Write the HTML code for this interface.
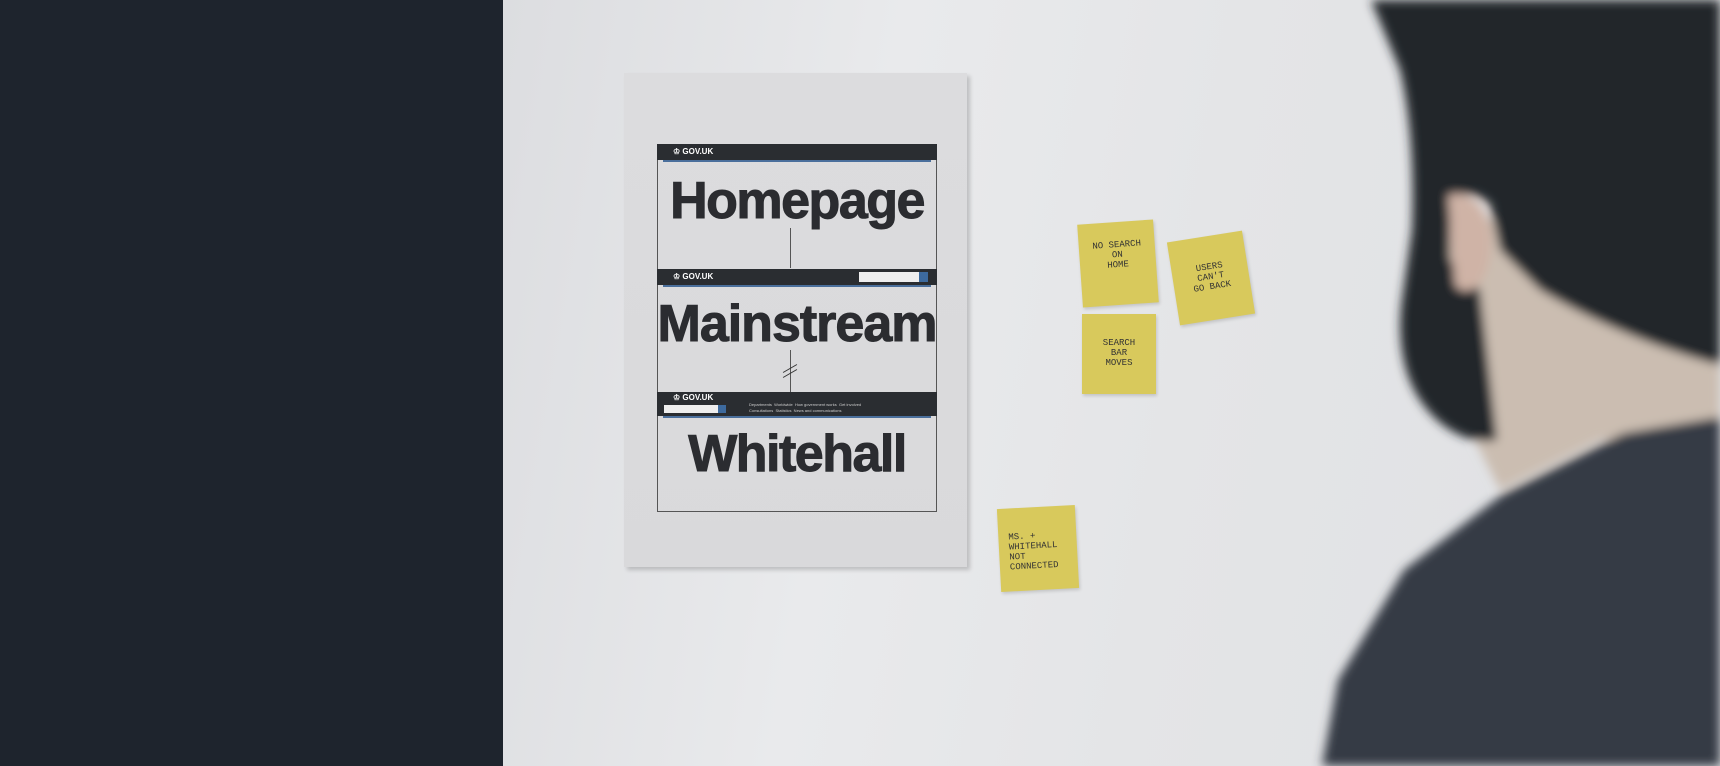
<!DOCTYPE html>
<html><head><meta charset="utf-8"><style>
html,body{margin:0;padding:0}
body{width:1720px;height:766px;position:relative;overflow:hidden;background:#e3e4e6;font-family:"Liberation Sans",Arial,sans-serif}
.left{position:absolute;left:0;top:0;width:503px;height:766px;background:#1e242d}
.wall{position:absolute;left:503px;top:0;width:1217px;height:766px;background:linear-gradient(100deg,#dcdde0 0%,#e9eaec 30%,#e4e5e7 55%,#dfe0e3 100%)}
.sheet{position:absolute;left:624px;top:73px;width:343px;height:494px;background:linear-gradient(180deg,#dcdcde,#d9d9db);box-shadow:3px 3px 4px rgba(0,0,0,.18)}
.frame{position:absolute;left:657px;top:144px;width:280px;height:368px;border:1px solid #555;box-sizing:border-box}
.bar{position:absolute;left:657px;width:280px;background:#2a2d31;color:#fff;font-size:8px;font-weight:bold}
.bar:after{content:"";position:absolute;left:6px;right:6px;bottom:-2px;height:2px;background:#4a6f9c}
.big{position:absolute;left:657px;width:280px;text-align:center;font-weight:bold;color:#2b2c30;letter-spacing:-1.5px;line-height:1;-webkit-text-stroke:1px #2b2c30}
.vl{position:absolute;left:790px;width:1px;background:#555}
.note{position:absolute;background:#d8c95c;box-shadow:1px 2px 3px rgba(0,0,0,.15);font-family:"Liberation Mono",monospace;font-size:9px;color:#333;text-align:center;padding-top:18px;box-sizing:border-box;line-height:10px}
</style></head><body>
<div class="left"></div>
<div class="wall"></div>
<div class="sheet"></div>
<div class="frame"></div>
<div class="bar" style="top:144px;height:16px;line-height:16px;padding-left:16px;box-sizing:border-box">♔ GOV.UK</div>
<div class="big" style="top:175px;font-size:52px">Homepage</div>
<div class="vl" style="top:228px;height:40px"></div>
<div class="bar" style="top:269px;height:16px;line-height:16px;padding-left:16px;box-sizing:border-box">♔ GOV.UK<span style="position:absolute;left:202px;top:3px;width:60px;height:10px;background:#eee"></span><span style="position:absolute;left:262px;top:3px;width:9px;height:10px;background:#3d6a9e"></span></div>
<div class="big" style="top:298px;font-size:52px;letter-spacing:-1px">Mainstream</div>
<div class="vl" style="top:350px;height:42px"></div>
<div style="position:absolute;left:782px;top:368px;width:16px;height:1px;background:#333;transform:rotate(-30deg)"></div>
<div style="position:absolute;left:782px;top:373px;width:16px;height:1px;background:#333;transform:rotate(-30deg)"></div>
<div class="bar" style="top:392px;height:24px;padding-left:16px;box-sizing:border-box;line-height:12px">♔ GOV.UK<span style="position:absolute;left:7px;top:13px;width:54px;height:8px;background:#eee"></span><span style="position:absolute;left:61px;top:13px;width:8px;height:8px;background:#3d6a9e"></span><span style="position:absolute;left:92px;top:10px;font-size:4px;line-height:6px;font-weight:normal;color:#ccc">Departments &nbsp;Worldwide &nbsp;How government works &nbsp;Get involved<br>Consultations &nbsp;Statistics &nbsp;News and communications</span></div>
<div class="big" style="top:428px;font-size:52px">Whitehall</div>
<div class="note" style="left:1080px;top:222px;width:76px;height:83px;transform:rotate(-4deg)">NO SEARCH<br>ON<br>HOME</div>
<div class="note" style="left:1173px;top:236px;width:76px;height:84px;transform:rotate(-9deg);padding-top:26px">USERS<br>CAN'T<br>GO BACK</div>
<div class="note" style="left:1082px;top:314px;width:74px;height:80px;padding-top:24px">SEARCH<br>BAR<br>MOVES</div>
<div class="note" style="left:999px;top:507px;width:78px;height:83px;transform:rotate(-3deg);padding-top:24px;text-align:left;padding-left:10px">MS. +<br>WHITEHALL<br>NOT<br>CONNECTED</div>
<svg style="position:absolute;left:0;top:0" width="1720" height="766">
<defs><filter id="b"><feGaussianBlur stdDeviation="5"/></filter></defs>
<g filter="url(#b)">
<path d="M1440 200 C1480 200 1540 260 1600 300 L1720 340 L1720 430 L1600 440 L1500 490 L1470 430 L1440 320 Z" fill="#cbbdb1"/>
<path d="M1371 0 L1720 0 L1720 365 C1660 350 1590 320 1540 290 L1500 250 L1490 205 C1475 190 1455 190 1450 210 L1450 260 L1480 290 L1497 440 C1470 445 1440 430 1420 400 C1400 370 1398 330 1402 300 L1412 230 C1414 180 1412 120 1400 70 Z" fill="#24272c"/>
<path d="M1448 195 C1475 188 1495 215 1490 255 C1485 290 1465 298 1455 285 Z" fill="#cfb3a6"/>
<path d="M1720 417 L1624 433 L1503 494 L1404 570 L1338 680 L1322 766 L1720 766 Z" fill="#363b44"/>
</g>
</svg>
</body></html>
